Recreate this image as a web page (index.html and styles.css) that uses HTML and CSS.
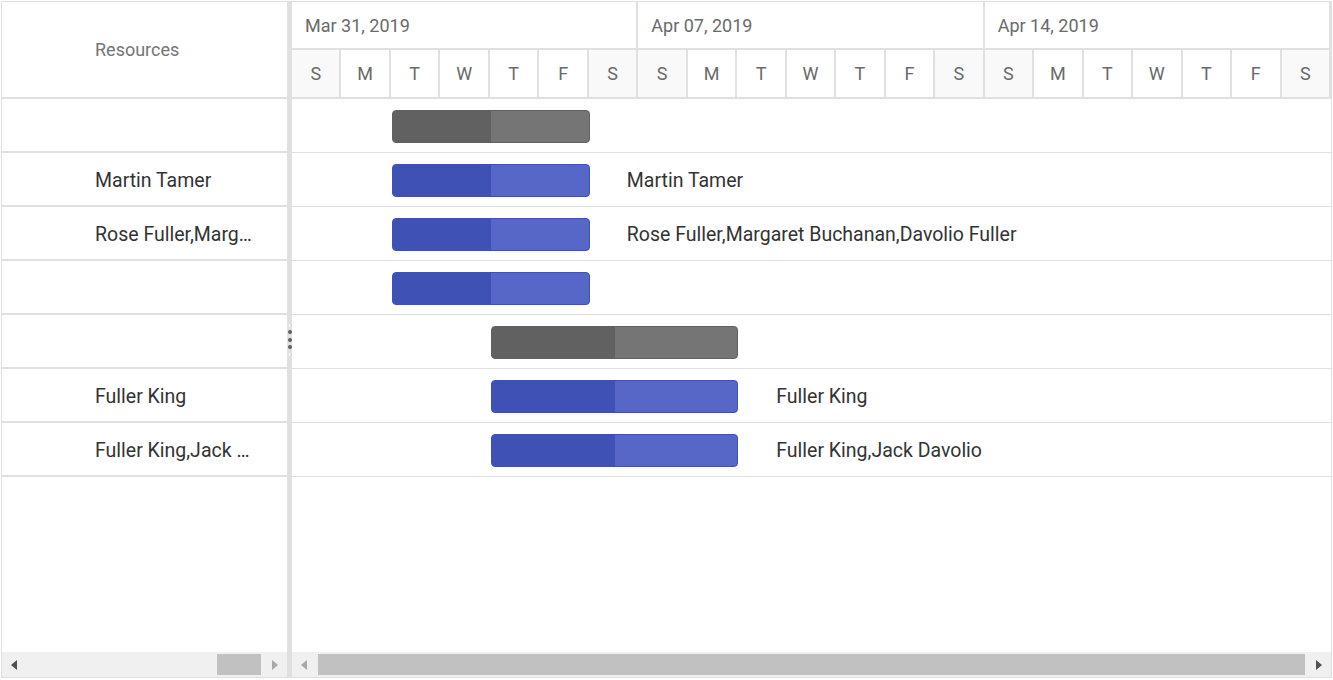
FILE: index.html
```html
<!DOCTYPE html>
<html>
<head>
<meta charset="utf-8">
<link rel="stylesheet" href="styles.css">
</head>
<body>
<div class="gantt">
  <div class="pane grid-pane">
    <div class="grid-header"><span>Resources</span></div>
    <div class="grid-body">
      <div class="grid-row"><span class="cell"></span></div>
      <div class="grid-row"><span class="cell">Martin Tamer</span></div>
      <div class="grid-row"><span class="cell">Rose Fuller,Margaret Buchanan,Davolio Fuller</span></div>
      <div class="grid-row"><span class="cell"></span></div>
      <div class="grid-row"><span class="cell"></span></div>
      <div class="grid-row"><span class="cell">Fuller King</span></div>
      <div class="grid-row"><span class="cell">Fuller King,Jack Davolio</span></div>
    </div>
    <div class="scrollbar">
      <div class="sb-btn"><span class="arrow-left dark"></span></div>
      <div class="sb-track end"><div class="thumb small"></div></div>
      <div class="sb-btn"><span class="arrow-right light"></span></div>
    </div>
  </div>
  <div class="splitter">
    <div class="handle">
      <span class="tick"></span>
      <span class="dot"></span>
      <span class="dot"></span>
      <span class="dot"></span>
      <span class="tick"></span>
    </div>
  </div>
  <div class="pane chart-pane">
    <div class="timeline">
      <div class="tier top">
        <div class="week">Mar 31, 2019</div>
        <div class="week">Apr 07, 2019</div>
        <div class="week">Apr 14, 2019</div>
      </div>
      <div class="tier days">
        <div class="day we">S</div><div class="day">M</div><div class="day">T</div><div class="day">W</div><div class="day">T</div><div class="day">F</div><div class="day we">S</div>
        <div class="day we">S</div><div class="day">M</div><div class="day">T</div><div class="day">W</div><div class="day">T</div><div class="day">F</div><div class="day we">S</div>
        <div class="day we">S</div><div class="day">M</div><div class="day">T</div><div class="day">W</div><div class="day">T</div><div class="day">F</div><div class="day we">S</div>
      </div>
    </div>
    <div class="chart-body">
      <div class="chart-row">
        <div class="bar parent w1"><div class="progress"></div></div>
      </div>
      <div class="chart-row">
        <div class="bar child w1"><div class="progress"></div></div>
        <div class="label l1">Martin Tamer</div>
      </div>
      <div class="chart-row">
        <div class="bar child w1"><div class="progress"></div></div>
        <div class="label l1">Rose Fuller,Margaret Buchanan,Davolio Fuller</div>
      </div>
      <div class="chart-row">
        <div class="bar child w1"><div class="progress"></div></div>
      </div>
      <div class="chart-row">
        <div class="bar parent w2"><div class="progress"></div></div>
      </div>
      <div class="chart-row">
        <div class="bar child w2"><div class="progress"></div></div>
        <div class="label l2">Fuller King</div>
      </div>
      <div class="chart-row">
        <div class="bar child w2"><div class="progress"></div></div>
        <div class="label l2">Fuller King,Jack Davolio</div>
      </div>
    </div>
    <div class="scrollbar">
      <div class="sb-btn"><span class="arrow-left light"></span></div>
      <div class="sb-track"><div class="thumb wide"></div></div>
      <div class="sb-btn"><span class="arrow-right dark"></span></div>
    </div>
  </div>
</div>
</body>
</html>
```
FILE: styles.css
```css
* { box-sizing: border-box; }
html, body { margin: 0; padding: 0; background: #fff; }
body { font-family: Roboto, "Liberation Sans", Arial, sans-serif; }

.gantt {
  margin: 1px 0 0 1px;
  width: 1331px;
  height: 677px;
  border: 1px solid #e0e0e0;
  display: flex;
  overflow: hidden;
}

.pane { display: flex; flex-direction: column; height: 100%; }
.grid-pane { width: 285px; flex: none; }
.chart-pane { flex: 1; min-width: 0; }

/* left grid */
.grid-header {
  height: 97px;
  border-bottom: 2px solid #e0e0e0;
  display: flex;
  align-items: center;
  padding-left: 93px;
  font-size: 18px;
  font-weight: 400;
  color: #757575;
}
.grid-body { flex: 1; }
.grid-row {
  height: 54px;
  border-bottom: 2px solid #e0e0e0;
  display: flex;
  align-items: center;
  padding: 2px 30px 0 93px;
}
.cell {
  display: block;
  width: 100%;
  white-space: nowrap;
  overflow: hidden;
  text-overflow: ellipsis;
  font-size: 19.5px;
  color: #333;
}

/* splitter */
.splitter {
  width: 5px;
  flex: none;
  background: #e0e0e0;
  display: flex;
  align-items: center;
  justify-content: center;
}
.handle {
  display: flex;
  flex-direction: column;
  align-items: center;
  gap: 3.5px;
}
.dot {
  width: 4px;
  height: 4px;
  border-radius: 50%;
  background: #616161;
}
.tick {
  width: 1px;
  height: 3px;
  background: #fff;
}

/* timeline */
.timeline { height: 97px; border-bottom: 2px solid #e0e0e0; }
.tier { display: grid; }
.tier.top {
  height: 48px;
  grid-template-columns: repeat(3, 1fr);
  border-bottom: 2px solid #e0e0e0;
}
.week {
  border-right: 2px solid #e0e0e0;
  padding-left: 13px;
  display: flex;
  align-items: center;
  font-size: 18px;
  color: #6a6a6a;
}
.tier.days {
  height: 47px;
  grid-template-columns: repeat(21, 1fr);
}
.day {
  border-right: 2px solid #e0e0e0;
  display: flex;
  align-items: center;
  justify-content: center;
  font-size: 18px;
  color: #6a6a6a;
}
.day.we { background: #f9f9f9; }

/* chart body */
.chart-body { flex: 1; }
.chart-row {
  height: 54px;
  border-bottom: 1px solid #e0e0e0;
  display: grid;
  grid-template-columns: repeat(21, 1fr);
  align-items: center;
  padding-top: 2px;
}
.bar {
  height: 33px;
  border-radius: 4px;
  border: 1px solid;
  overflow: hidden;
  margin-left: 1px;
  margin-right: -1px;
}
.bar .progress { width: 50%; height: 100%; }
.bar.parent { border-color: #616161; background: #757575; }
.bar.parent .progress { background: #616161; }
.bar.child { border-color: #3f51b5; background: #5767c7; }
.bar.child .progress { background: #3f51b5; }
.w1 { grid-column: 3 / 7; }
.w2 { grid-column: 5 / 10; }
.label {
  white-space: nowrap;
  font-size: 19.5px;
  color: #333;
}
.l1 { grid-column: 7 / 22; padding-left: 38px; }
.l2 { grid-column: 10 / 22; padding-left: 39px; }

/* scrollbars */
.scrollbar {
  height: 25px;
  flex: none;
  background: #f0f0f0;
  display: flex;
  align-items: center;
}
.sb-btn {
  width: 24px;
  height: 100%;
  flex: none;
  display: flex;
  align-items: center;
  justify-content: center;
}
.sb-track {
  flex: 1;
  height: 100%;
  display: flex;
  align-items: center;
  padding: 0 2px;
}
.sb-track.end { justify-content: flex-end; }
.thumb { height: 21px; background: #c1c1c1; }
.thumb.small { width: 44px; }
.thumb.wide { flex: 1; }
.arrow-left, .arrow-right {
  width: 0;
  height: 0;
  border-top: 5.5px solid transparent;
  border-bottom: 5.5px solid transparent;
}
.arrow-left { border-right: 6px solid; }
.arrow-right { border-left: 6px solid; }
.dark { color: #505050; }
.light { color: #a8a8a8; }
```
